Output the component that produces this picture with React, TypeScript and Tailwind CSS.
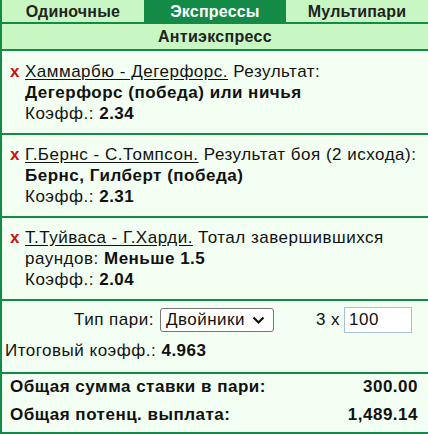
import React from "react";

const Bet = ({ line1, line2, k, first }: { line1: React.ReactNode; line2: React.ReactNode; k: string; first?: boolean }) => (
  <div className={`relative border-b-2 border-[#138a45] pb-[9px] pl-[23px] pr-[4px] leading-[21px] whitespace-nowrap ${first ? "pt-[10px]" : "pt-[9px]"}`}>
    <span className={`absolute left-[8px] font-bold text-[17px] leading-[21px] text-[#d01010] tracking-normal ${first ? "top-[10px]" : "top-[9px]"}`}>x</span>
    <div>{line1}</div>
    <div>{line2}</div>
    <div>
      Коэфф.: <b>{k}</b>
    </div>
  </div>
);

export default function App() {
  return (
    <div
      className="w-[428px] h-[434px] overflow-hidden border-l-2 border-b-2 border-[#138a45] bg-[#f3fff3] text-[17px] tracking-[0.5px] text-[#111]"
      style={{ fontFamily: '"Liberation Sans", Arial, sans-serif' }}
    >
      <div className="grid grid-cols-3 h-[24px] border-b-2 border-[#138a45] bg-[#c8f7c4] text-[16px] tracking-[0.2px] font-bold">
        <div className="flex items-center justify-center text-[#222]">Одиночные</div>
        <div className="flex items-center justify-center bg-[#138a45] text-white">Экспрессы</div>
        <div className="flex items-center justify-center text-[#222]">Мультипари</div>
      </div>
      <div className="h-[27px] flex items-center justify-center border-b-2 border-[#138a45] bg-[#c8f7c4] text-[16px] tracking-[0.3px] font-bold text-[#222]">
        Антиэкспресс
      </div>
      <Bet
        first
        line1={<><span className="underline underline-offset-2">Хаммарбю - Дегерфорс.</span> Результат:</>}
        line2={<b>Дегерфорс (победа) или ничья</b>}
        k="2.34"
      />
      <Bet
        line1={<><span className="underline underline-offset-2">Г.Бернс - С.Томпсон.</span> Результат боя (2 исхода):</>}
        line2={<b>Бернс, Гилберт (победа)</b>}
        k="2.31"
      />
      <Bet
        line1={<><span className="underline underline-offset-2">Т.Туйваса - Г.Харди.</span> Тотал завершившихся</>}
        line2={<>раундов: <b>Меньше 1.5</b></>}
        k="2.04"
      />
      <div className="border-b-2 border-[#138a45] pt-[6px] pb-[11px]">
        <div className="flex items-center h-[26px] pl-[72px]">
          <span>Тип пари:</span>
          <div className="ml-[6px] flex items-center justify-between w-[114px] h-[24px] border border-[#767676] rounded-[3px] bg-white pl-[5px] pr-[8px]">
            <span>Двойники</span>
            <svg width="13" height="9" viewBox="0 0 13 9" fill="none">
              <path d="M1.5 1.5 L6.5 6.5 L11.5 1.5" stroke="#111" strokeWidth="2.2" />
            </svg>
          </div>
          <span className="ml-[42px]">3 x</span>
          <div className="ml-[4px] w-[68px] h-[26px] border border-[#a9c0d6] bg-white pl-[4px] flex items-center">100</div>
        </div>
        <div className="pl-[3px] mt-[7px] leading-[21px]">
          Итоговый коэфф.: <b>4.963</b>
        </div>
      </div>
      <div className="pt-[3px] pl-[8px] pr-[10px] font-bold leading-[20px]">
        <div className="flex justify-between">
          <span>Общая сумма ставки в пари:</span>
          <span>300.00</span>
        </div>
        <div className="flex justify-between mt-[8px]">
          <span>Общая потенц. выплата:</span>
          <span>1,489.14</span>
        </div>
      </div>
    </div>
  );
}
